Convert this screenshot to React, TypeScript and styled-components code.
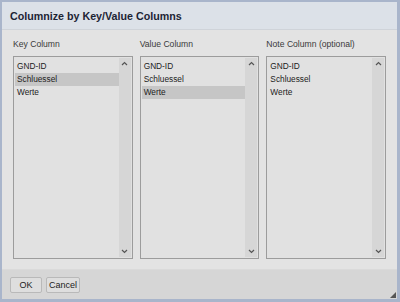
import React from 'react';
import styled, { createGlobalStyle } from 'styled-components';

const GlobalStyle = createGlobalStyle`
  html, body {
    margin: 0;
    padding: 0;
    background: #a9b5cb;
  }
  * {
    box-sizing: border-box;
  }
`;

const Frame = styled.div`
  width: 400px;
  height: 302px;
  border: 2px solid #a9b5cb;
  border-right-width: 3px;
  border-bottom-width: 3px;
  display: flex;
  flex-direction: column;
  font-family: 'Liberation Sans', Arial, sans-serif;
  background: #e3e3e3;
  position: relative;
`;

const Header = styled.div`
  height: 28px;
  background: #dce1e8;
  border-bottom: 1px solid #cfd3d9;
  display: flex;
  align-items: center;
  padding-left: 8px;
  font-size: 10.7px;
  font-weight: bold;
  color: #1c2434;
`;

const Body = styled.div`
  flex: 1;
  display: flex;
  gap: 7px;
  padding: 8px 11px 10px 11px;
`;

const Column = styled.div`
  width: 120px;
  display: flex;
  flex-direction: column;
`;

const Label = styled.div`
  font-size: 8.6px;
  color: #3a3a3a;
  height: 18px;
  line-height: 12px;
`;

const ListBox = styled.div`
  flex: 1;
  display: flex;
  border: 1px solid #9c9c9c;
  background: #e1e1e1;
  padding: 1px;
`;

const Items = styled.ul`
  flex: 1;
  list-style: none;
  margin: 0;
  padding: 2px 0 0 0;
`;

const Item = styled.li<{ $selected?: boolean }>`
  height: 13px;
  line-height: 13px;
  font-size: 8.3px;
  color: #222;
  padding-left: 2px;
  background: ${(p) => (p.$selected ? '#c6c6c6' : 'transparent')};
`;

const ScrollBar = styled.div`
  width: 12px;
  background: #d6d6d6;
  display: flex;
  flex-direction: column;
  justify-content: space-between;
  align-items: center;
  padding: 3px 0;
  color: #555;
`;

const Footer = styled.div`
  height: 30px;
  background: #d6d6d6;
  border-top: 1px solid #dadada;
  display: flex;
  align-items: center;
  gap: 4px;
  padding-left: 8px;
`;

const Button = styled.button<{ $width: number }>`
  width: ${(p) => p.$width}px;
  height: 16px;
  padding: 0;
  font-family: 'Liberation Sans', Arial, sans-serif;
  font-size: 9px;
  color: #222;
  background: #dedede;
  border: 1px solid #b9b9b9;
  border-radius: 2px;
`;

const Grip = styled.svg`
  position: absolute;
  right: 1px;
  bottom: 1px;
`;

const Chevron = ({ up }: { up?: boolean }) => (
  <svg width="7" height="5" viewBox="0 0 7 5">
    <path
      d={up ? 'M1 4 L3.5 1.5 L6 4' : 'M1 1 L3.5 3.5 L6 1'}
      fill="none"
      stroke="#555"
      strokeWidth="1.2"
    />
  </svg>
);

const entries = ['GND-ID', 'Schluessel', 'Werte'];

const columns = [
  { label: 'Key Column', selected: 1 },
  { label: 'Value Column', selected: 2 },
  { label: 'Note Column (optional)', selected: -1 },
];

export default function App() {
  return (
    <>
      <GlobalStyle />
      <Frame>
        <Header>Columnize by Key/Value Columns</Header>
        <Body>
          {columns.map((col) => (
            <Column key={col.label}>
              <Label>{col.label}</Label>
              <ListBox>
                <Items>
                  {entries.map((e, i) => (
                    <Item key={e} $selected={i === col.selected}>
                      {e}
                    </Item>
                  ))}
                </Items>
                <ScrollBar>
                  <Chevron up />
                  <Chevron />
                </ScrollBar>
              </ListBox>
            </Column>
          ))}
        </Body>
        <Footer>
          <Button $width={32}>OK</Button>
          <Button $width={34}>Cancel</Button>
        </Footer>
        <Grip width="6" height="6" viewBox="0 0 6 6">
          <path d="M6 0 L6 6 L0 6 Z" fill="#555" />
        </Grip>
      </Frame>
    </>
  );
}
